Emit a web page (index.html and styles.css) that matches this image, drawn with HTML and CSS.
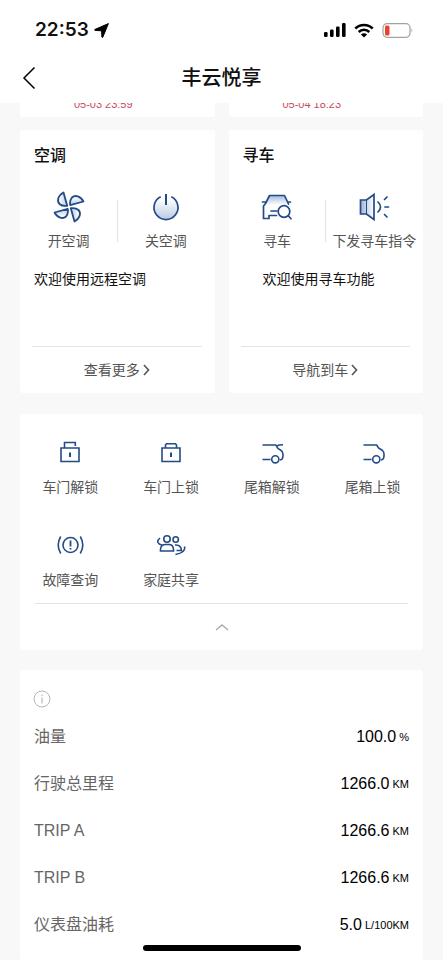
FILE: index.html
```html
<!DOCTYPE html>
<html lang="zh-CN">
<head>
<meta charset="utf-8">
<meta name="viewport" content="width=device-width, initial-scale=1">
<title>丰云悦享</title>
<link rel="stylesheet" href="styles.css">
</head>
<body>
<svg class="defs" aria-hidden="true">
  <defs>
    <linearGradient id="tint-up" x1="0" y1="0" x2="0" y2="1"><stop offset="0.1" stop-color="#fff"/><stop offset="1" stop-color="#b9cae4"/></linearGradient>
    <linearGradient id="tint-down" x1="0" y1="0" x2="0" y2="1"><stop offset="0" stop-color="#a4badb"/><stop offset="1" stop-color="#fff"/></linearGradient>
    <linearGradient id="tint-side" x1="0" y1="0" x2="1" y2="0"><stop offset="0" stop-color="#9fb7da"/><stop offset="1" stop-color="#fff"/></linearGradient>
    <path id="blade" d="M17.200 14.200 30.500 10.500C27.500 5 22 3.600 19 6.500 17 8.800 16.800 11.500 17.200 14.200Z"/>
  </defs>
</svg>
<div class="app">
  <header class="header">
    <div class="status">
      <span class="time">22:53</span>
      <svg class="location" width="15" height="15" viewBox="0 0 15 15"><path d="M14.4.6 8.8 14.2Q8.3 15 7.9 14L7.6 7.8 1 7.4Q0 7 1 6.400Z" fill="#000" stroke="#000" stroke-width="1" stroke-linejoin="round"/></svg>
      <span class="spacer"></span>
      <svg width="24" height="15" viewBox="0 0 24 15"><rect x="1" y="9" width="3.600" height="5" rx="1.200"/><rect x="7" y="6.500" width="3.600" height="7.500" rx="1.200"/><rect x="13" y="3.500" width="3.600" height="10.500" rx="1.200"/><rect x="19" y="0" width="3.600" height="14" rx="1.200"/></svg>
      <svg class="wifi" width="20" height="15" viewBox="0 0 20 15"><g fill="none" stroke="#000" stroke-width="2.500"><path d="M1.300 5.500a12.300 12.300 0 0 1 17.400 0"/><path d="M4.700 9a7.500 7.500 0 0 1 10.600 0"/></g><path d="M10 14.500 6.900 11.500a4.400 4.400 0 0 1 6.200 0Z"/></svg>
      <svg class="battery" width="32" height="15" viewBox="0 0 32 15"><rect x="1" y=".7" width="27" height="13.600" rx="4" fill="none" stroke="#a2a2a2" stroke-width="1.200"/><rect x="3" y="2.500" width="4.500" height="10" rx="1.500" fill="#e8432f"/><path d="M29.700 5.300q1.600 2.200 0 4.400Z" fill="#777"/></svg>
    </div>
    <div class="navbar">
      <button class="back" type="button" aria-label="返回"><svg width="14" height="24" viewBox="0 0 14 24"><path d="M12.500 1.500 2 12l10.500 10.500" fill="none" stroke="#000" stroke-width="1.500"/></svg></button>
      <h1>丰云悦享</h1>
    </div>
  </header>

  <main class="content">
    <div class="pair tail">
      <div class="card stamp"><time>05-03 23:59</time></div>
      <div class="card stamp"><time>05-04 18:23</time></div>
    </div>

    <div class="pair">
      <section class="card feature">
        <h2>空调</h2>
        <div class="actions">
          <button type="button">
            <svg width="32" height="32" viewBox="0 0 32 32" fill="url(#tint-up)" stroke="#234b86" stroke-width="1.800" stroke-linejoin="round"><use href="#blade"/><use href="#blade" transform="rotate(90 16 16)"/><use href="#blade" transform="rotate(180 16 16)"/><use href="#blade" transform="rotate(270 16 16)"/></svg>
            <span>开空调</span>
          </button>
          <button type="button">
            <svg width="32" height="32" viewBox="0 0 32 32" fill="none" stroke="#234b86" stroke-width="1.700"><path d="M10.700 5.800a12 12 0 1 0 10.600 0" fill="url(#tint-up)"/><path d="M16 3v11" stroke-width="2"/></svg>
            <span>关空调</span>
          </button>
        </div>
        <p class="message">欢迎使用远程空调</p>
        <a class="more" href="#climate">查看更多<svg width="7" height="12" viewBox="0 0 7 12"><path d="m1 1 4.500 5L1 11" fill="none" stroke="#555" stroke-width="1.600"/></svg></a>
      </section>
      <section class="card feature">
        <h2>寻车</h2>
        <div class="actions">
          <button type="button">
            <svg width="32" height="32" viewBox="0 0 32 32" fill="none" stroke="#234b86" stroke-width="1.700" stroke-linecap="round" stroke-linejoin="round"><path d="M3.500 14 8.500 4.500h15L28 14Z" fill="url(#tint-down)" stroke="none"/><path d="M27.500 13 23.500 4.500h-15L4.500 12.500 2.500 15v12.500H8v-3h7.500M10 20h6M1.500 11H4.500M27.500 11h2"/><circle cx="23" cy="20.500" r="5.800" fill="#fff"/><path d="m27.300 24.800 2.700 3"/></svg>
            <span>寻车</span>
          </button>
          <button type="button">
            <svg width="32" height="32" viewBox="0 0 32 32" fill="none" stroke="#234b86" stroke-width="1.700" stroke-linecap="round"><path d="M2.500 9h6l7.500-5.500v25L8.500 23h-6Z" fill="url(#tint-side)"/><path d="M8.500 9v14" stroke-width="1"/><path d="M20 11q5 5 0 10M26.500 8.500l2.500-2.500M27 16h3.500M26.500 23.500 29 26"/></svg>
            <span>下发寻车指令</span>
          </button>
        </div>
        <p class="message inset">欢迎使用寻车功能</p>
        <a class="more" href="#navigate">导航到车<svg width="7" height="12" viewBox="0 0 7 12"><path d="m1 1 4.500 5L1 11" fill="none" stroke="#555" stroke-width="1.600"/></svg></a>
      </section>
    </div>

    <section class="card shortcuts">
      <div class="grid">
        <button type="button"><svg width="30" height="24" viewBox="0 0 30 24"><path d="M6 8h18v13.500H6ZM9.500 8V2.500h10.800V6"/><path d="M15 12.500v4.500" stroke-width="2"/></svg><span>车门解锁</span></button>
        <button type="button"><svg width="30" height="24" viewBox="0 0 30 24"><path d="M6 8h18v13.500H6ZM9.500 8V5l1-1.200h9l1 1.200v3"/><path d="M15 12.500v4.500" stroke-width="2"/></svg><span>车门上锁</span></button>
        <button type="button"><svg width="30" height="24" viewBox="0 0 30 24"><path d="M5.500 5H19M26 4.700q-4 0-6.500 1.300L19 5Q20.500 9 23.500 10q2.500 1.500 2.500 4v2q-.2 3.700-3 4M5.500 19.500h8"/><circle cx="18.300" cy="19.300" r="3.600"/></svg><span>尾箱解锁</span></button>
        <button type="button"><svg width="30" height="24" viewBox="0 0 30 24"><path d="M5.500 5h13.200l1.800 3 4 2.500q1.500 1.500 1.500 3.500v2q-.2 3.700-3 4M5.500 19.500h8"/><circle cx="18.300" cy="19.300" r="3.600"/></svg><span>尾箱上锁</span></button>
        <button type="button"><svg width="30" height="24" viewBox="0 0 30 24"><circle cx="15.500" cy="12" r="7.500"/><path d="M15.500 7.500v6M15.500 15v1.500" stroke-width="1.800"/><path d="M5.700 3.500q-5 8.500 0 17M25.300 3.500q5 8.500 0 17"/></svg><span>故障查询</span></button>
        <button type="button"><svg width="30" height="24" viewBox="0 0 30 24"><circle cx="11" cy="6" r="3.200"/><circle cx="19.700" cy="6.500" r="2.700"/><path d="M4.500 18v-2q.5-4.500 5-4.500h3.500q4 0 4.500 4.500v2ZM19 12q6-.5 6.500 5.500h-5M4 5Q1 7.500 2 9.500q.8 2 4 2.500M28.500 13.500q1.500 6-9 8"/></svg><span>家庭共享</span></button>
      </div>
      <button class="collapse" type="button" aria-label="收起"><svg width="14" height="8" viewBox="0 0 14 8"><path d="m1 7 6-5 6 5" fill="none" stroke="#aaa" stroke-width="1.400"/></svg></button>
    </section>

    <section class="card vehicle">
      <button class="info" type="button" aria-label="说明"><svg width="18" height="18" viewBox="0 0 18 18"><circle cx="9" cy="9" r="8" fill="none" stroke="#b5b5b5"/><path d="M9 7.500v6M9 4.500v1.500" stroke="#aaa"/></svg></button>
      <table>
        <tbody>
          <tr><th scope="row">油量</th><td>100.0<small>%</small></td></tr>
          <tr><th scope="row">行驶总里程</th><td>1266.0<small>KM</small></td></tr>
          <tr><th scope="row">TRIP A</th><td>1266.6<small>KM</small></td></tr>
          <tr><th scope="row">TRIP B</th><td>1266.6<small>KM</small></td></tr>
          <tr><th scope="row">仪表盘油耗</th><td>5.0<small>L/100KM</small></td></tr>
        </tbody>
      </table>
    </section>
  </main>
  <div class="home-indicator"></div>
</div>
</body>
</html>
```
FILE: styles.css
```css
* { box-sizing: border-box; }

body {
  margin: 0;
  background: #f8f8f8;
  color: #111;
  font-family: "Liberation Sans", "Noto Sans CJK SC", sans-serif;
  font-size: 14px;
  line-height: 20px;
}

h1, h2, p { margin: 0; }

button {
  margin: 0;
  padding: 0;
  border: 0;
  background: none;
  color: inherit;
  font: inherit;
}

svg { display: block; flex: none; }

.defs { position: absolute; width: 0; height: 0; }

.app {
  height: 100vh;
  display: flex;
  flex-direction: column;
  overflow: hidden;
}

.header { flex: none; background: #fff; }

.status {
  display: flex;
  align-items: center;
  padding: 18px 29px 0 35px;
}

.time {
  font-family: Inter, sans-serif;
  font-size: 19px;
  font-weight: 600;
  line-height: 24px;
}

.location { margin-left: 5px; }
.spacer { flex: 1; }
.wifi { margin-left: 7px; }
.battery { margin-left: 8px; }

.navbar {
  display: grid;
  grid-template-columns: 60px 1fr 60px;
  align-items: center;
  padding: 18px 0 7px;
}

.back { padding-left: 22px; }

h1 {
  text-align: center;
  font-size: 20px;
  font-weight: 500;
  line-height: 36px;
}

.content {
  flex: 1;
  min-height: 0;
  overflow: hidden;
  display: flex;
  flex-direction: column;
  padding: 0 20px;
}

.card { flex: none; background: #fff; border-radius: 3px; }

.pair {
  flex: none;
  display: grid;
  grid-template-columns: 1fr 1fr;
  gap: 14px;
}

.tail {
  height: 14px;
  margin-bottom: 13px;
  align-content: end;
  overflow: hidden;
}

.stamp {
  padding: 20px 28px 6px 0;
  text-align: center;
  color: #c64a5c;
  font-size: 11px;
  line-height: 14px;
}

.feature { padding: 14px 0 12px; }

h2 {
  padding-left: 14px;
  font-size: 16px;
  font-weight: 500;
  line-height: 24px;
}

.actions {
  display: grid;
  grid-template-columns: 1fr 1fr;
  margin-top: 23px;
  background: linear-gradient(#e2e2e2, #e2e2e2) center 9px / 1px 42px no-repeat;
}

.actions button {
  display: flex;
  flex-direction: column;
  align-items: center;
  gap: 8px;
  color: #555;
  white-space: nowrap;
}

.message { margin-top: 18px; padding-left: 14px; }
.inset { padding-left: 34px; }

.more {
  display: flex;
  align-items: center;
  justify-content: center;
  gap: 3px;
  margin: 57px 13px 0 12px;
  padding-top: 13px;
  padding-bottom: 1px;
  border-top: 1px solid #e4e4e4;
  color: #555;
  text-decoration: none;
}

.shortcuts { margin-top: 21px; padding-top: 26px; }

.grid {
  display: grid;
  grid-template-columns: repeat(4, 1fr);
  row-gap: 36px;
}

.grid button {
  display: flex;
  flex-direction: column;
  align-items: center;
  gap: 13px;
  color: #555;
}

.grid svg {
  fill: none;
  stroke: #234b86;
  stroke-width: 1.6px;
}

.collapse {
  display: flex;
  align-items: center;
  justify-content: center;
  width: calc(100% - 30px);
  height: 47px;
  margin: 13px 15px 0;
  border-top: 1px solid #e4e4e4;
}

.vehicle { flex: 1 0 auto; margin-top: 20px; padding: 20px 14px 0; }

.info { display: block; margin-left: -1px; }

table { width: 100%; margin-top: 5px; border-collapse: collapse; }

th, td { height: 47px; padding: 0; font-size: 16px; font-weight: 400; }

th { text-align: left; color: #666; }

td { text-align: right; color: #000; }

small { margin-left: 3px; font-size: 11px; vertical-align: 1px; }

.home-indicator {
  position: fixed;
  bottom: 9px;
  left: 50%;
  width: 158px;
  height: 6px;
  margin-left: -79px;
  border-radius: 3px;
  background: #000;
}
```
